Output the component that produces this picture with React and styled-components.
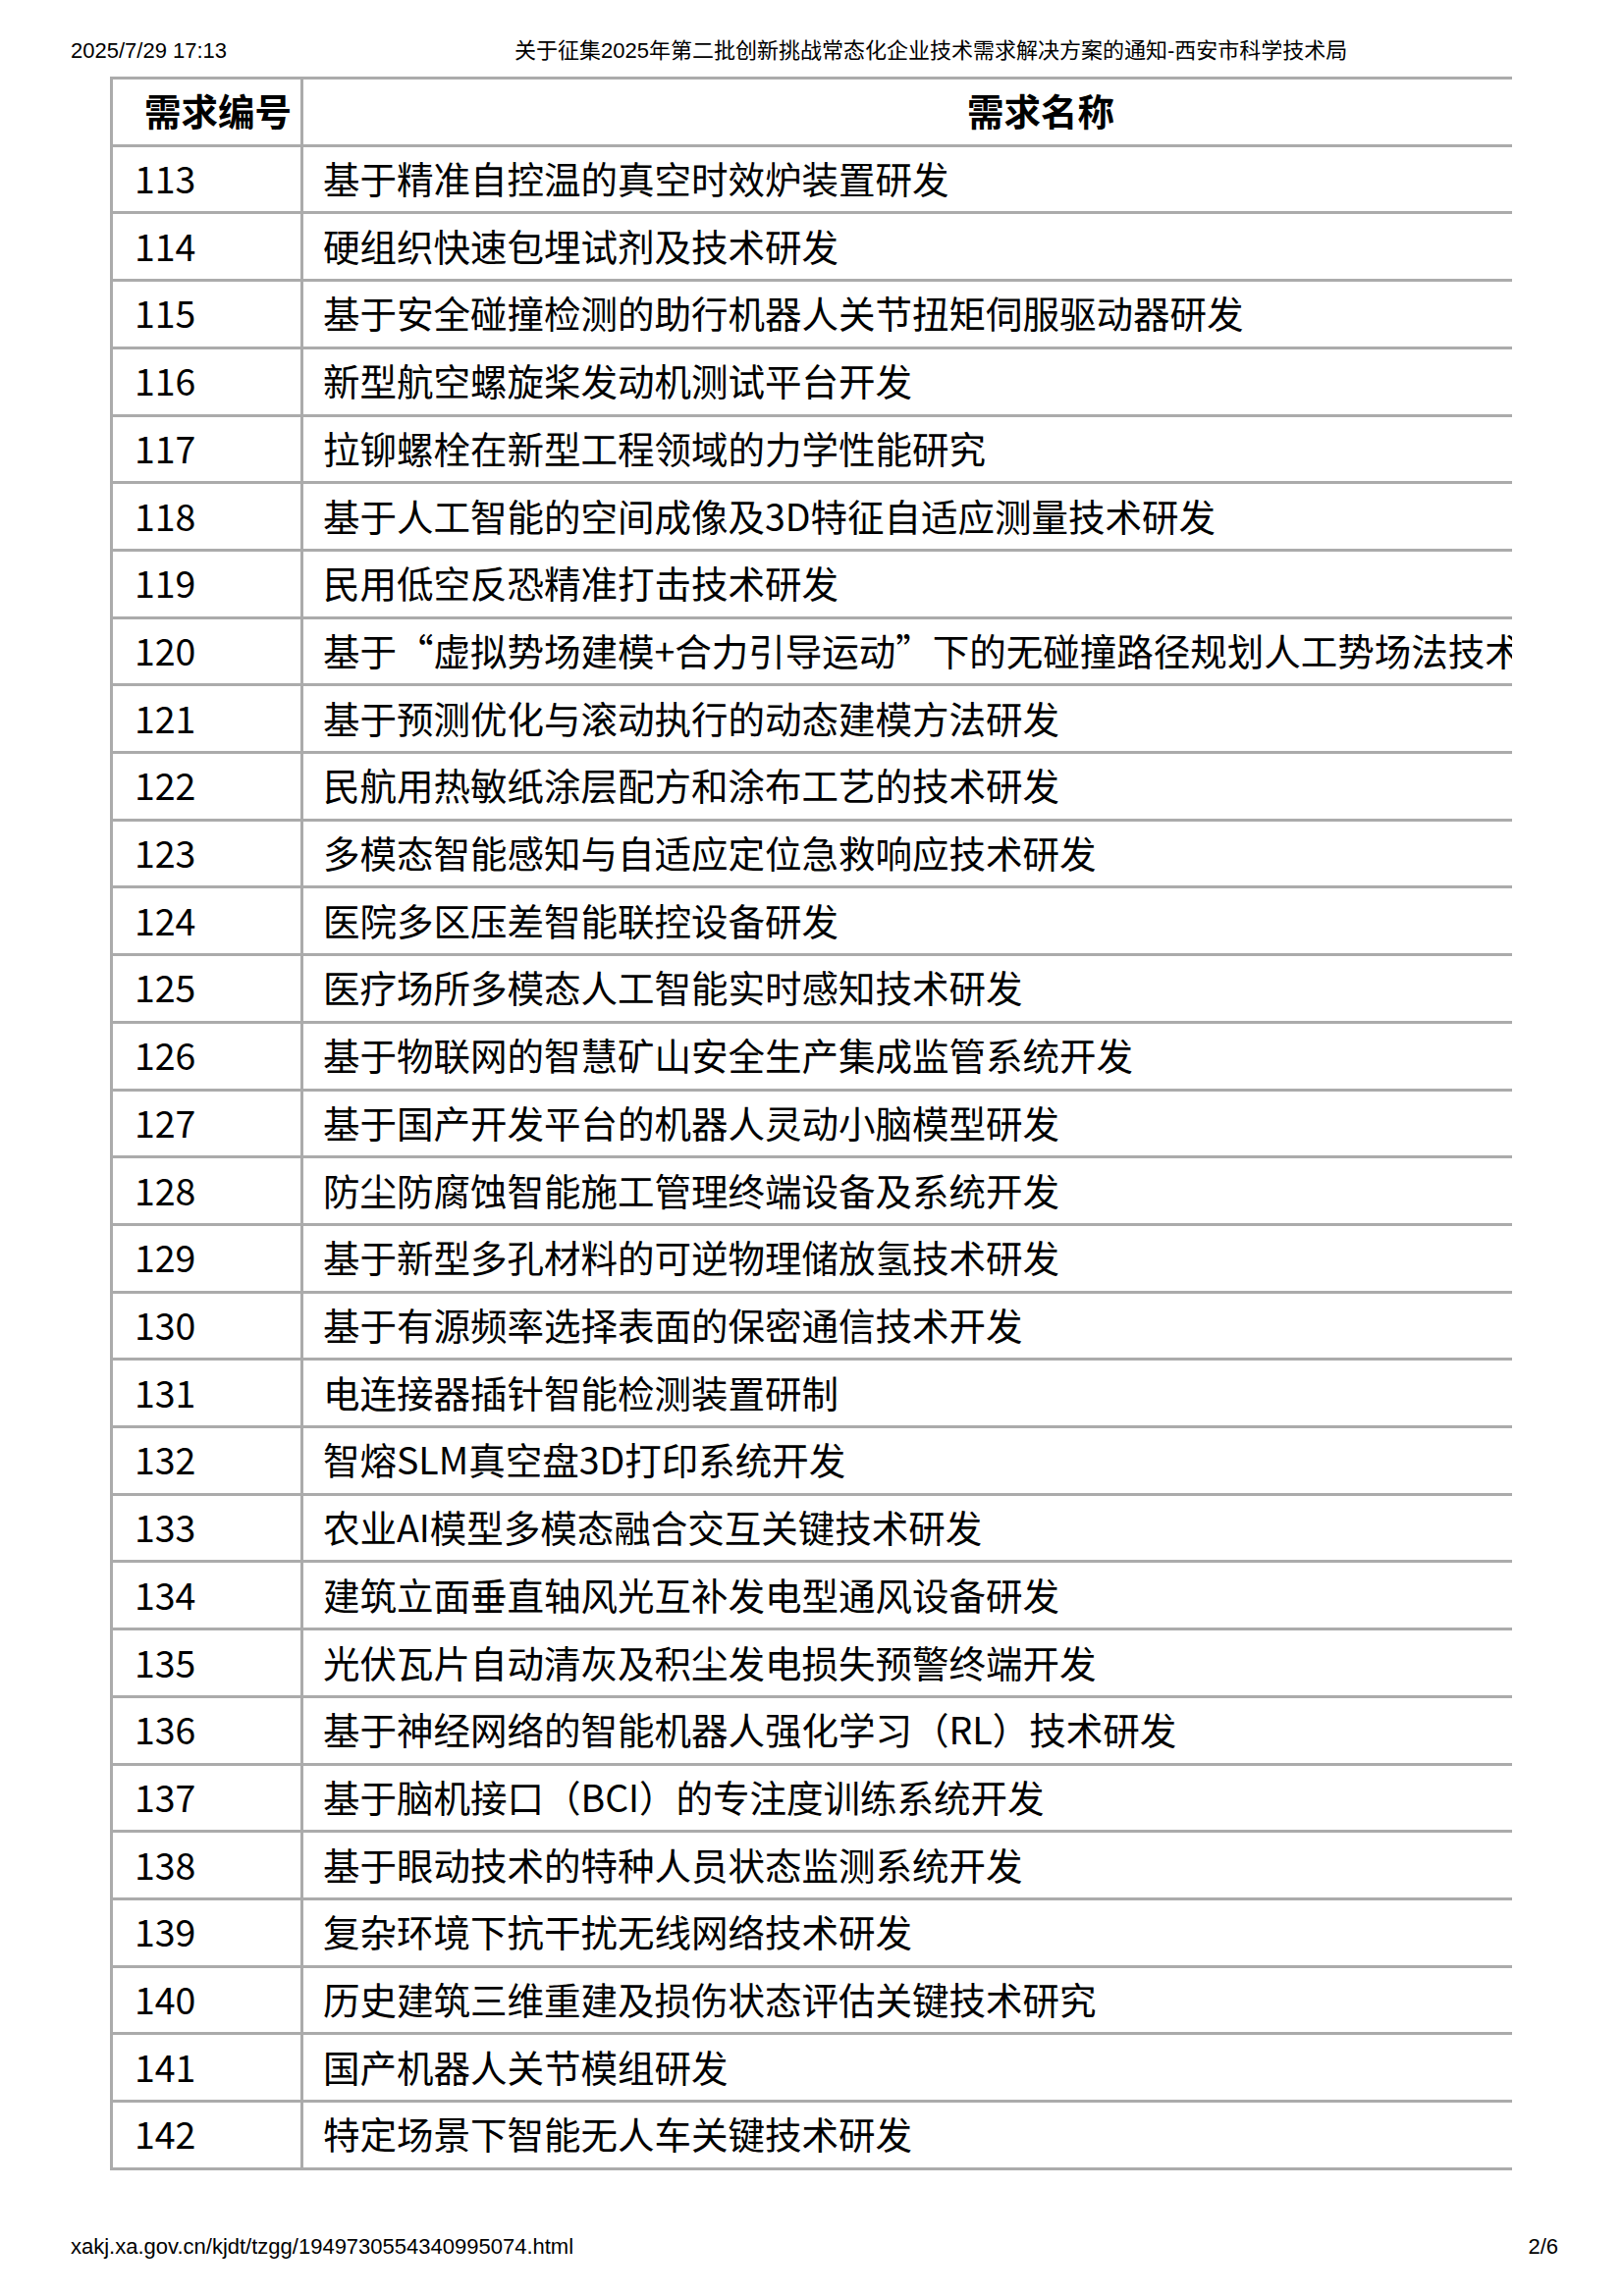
import React from 'react';
import styled, { createGlobalStyle } from 'styled-components';

const GlobalStyle = createGlobalStyle`
  html, body {
    margin: 0;
    padding: 0;
    background: #fff;
  }
`;

const Page = styled.div`
  width: 1653px;
  height: 2339px;
  display: flex;
  flex-direction: column;
  color: #000;
  font-family: "Liberation Sans", "Noto Sans CJK SC", sans-serif;
`;

const PrintHeader = styled.header`
  display: grid;
  grid-template-columns: 452px auto;
  align-items: baseline;
  padding: 41px 0 0 72px;
  line-height: 22px;
`;

const DateText = styled.span`
  font-size: 22px;
`;

const TitleText = styled.span`
  font-size: 22px;
  white-space: nowrap;
`;

const TableClip = styled.div`
  margin: 15px 0 0 112px;
  width: 1428px;
  overflow: hidden;
`;

const Table = styled.table`
  width: 1702px;
  table-layout: fixed;
  border-collapse: separate;
  border-spacing: 0;
  border-top: 3px solid #ababab;
  border-left: 3px solid #ababab;
  font-family: "Noto Sans CJK SC", "Open Sans", sans-serif;
  font-size: 37.5px;
`;

const Row = styled.tr`
  height: 68.71px;
`;

const HeadCell = styled.th`
  border-right: 3px solid #ababab;
  border-bottom: 3px solid #ababab;
  font-weight: 700;
  white-space: nowrap;
  vertical-align: middle;
  text-align: ${p => (p.$first ? 'left' : 'center')};
  padding: ${p => (p.$first ? '0 0 4px 32px' : '0 0 4px 0')};
`;

const Cell = styled.td`
  border-right: 3px solid #ababab;
  border-bottom: 3px solid #ababab;
  font-weight: 400;
  white-space: nowrap;
  overflow: hidden;
  vertical-align: middle;
  padding: ${p => (p.$num ? '0 0 4px 22px' : '0 0 4px 20px')};
`;

const PrintFooter = styled.footer`
  margin-top: auto;
  display: flex;
  justify-content: space-between;
  padding: 0 66px 39px 72px;
  font-size: 22px;
  line-height: 22px;
`;

const rows = [
  [113, '基于精准自控温的真空时效炉装置研发'],
  [114, '硬组织快速包埋试剂及技术研发'],
  [115, '基于安全碰撞检测的助行机器人关节扭矩伺服驱动器研发'],
  [116, '新型航空螺旋桨发动机测试平台开发'],
  [117, '拉铆螺栓在新型工程领域的力学性能研究'],
  [118, '基于人工智能的空间成像及3D特征自适应测量技术研发'],
  [119, '民用低空反恐精准打击技术研发'],
  [120, '基于“虚拟势场建模+合力引导运动”下的无碰撞路径规划人工势场法技术研发'],
  [121, '基于预测优化与滚动执行的动态建模方法研发'],
  [122, '民航用热敏纸涂层配方和涂布工艺的技术研发'],
  [123, '多模态智能感知与自适应定位急救响应技术研发'],
  [124, '医院多区压差智能联控设备研发'],
  [125, '医疗场所多模态人工智能实时感知技术研发'],
  [126, '基于物联网的智慧矿山安全生产集成监管系统开发'],
  [127, '基于国产开发平台的机器人灵动小脑模型研发'],
  [128, '防尘防腐蚀智能施工管理终端设备及系统开发'],
  [129, '基于新型多孔材料的可逆物理储放氢技术研发'],
  [130, '基于有源频率选择表面的保密通信技术开发'],
  [131, '电连接器插针智能检测装置研制'],
  [132, '智熔SLM真空盘3D打印系统开发'],
  [133, '农业AI模型多模态融合交互关键技术研发'],
  [134, '建筑立面垂直轴风光互补发电型通风设备研发'],
  [135, '光伏瓦片自动清灰及积尘发电损失预警终端开发'],
  [136, '基于神经网络的智能机器人强化学习（RL）技术研发'],
  [137, '基于脑机接口（BCI）的专注度训练系统开发'],
  [138, '基于眼动技术的特种人员状态监测系统开发'],
  [139, '复杂环境下抗干扰无线网络技术研发'],
  [140, '历史建筑三维重建及损伤状态评估关键技术研究'],
  [141, '国产机器人关节模组研发'],
  [142, '特定场景下智能无人车关键技术研发']
];

const App = () => {
  return (
    <Page>
      <GlobalStyle />
      <PrintHeader>
        <DateText>2025/7/29 17:13</DateText>
        <TitleText>关于征集2025年第二批创新挑战常态化企业技术需求解决方案的通知-西安市科学技术局</TitleText>
      </PrintHeader>
      <TableClip>
        <Table>
          <colgroup>
            <col style={{ width: '194px' }} />
            <col />
          </colgroup>
          <thead>
            <Row>
              <HeadCell $first>需求编号</HeadCell>
              <HeadCell>需求名称</HeadCell>
            </Row>
          </thead>
          <tbody>
            {rows.map(([id, name]) => (
              <Row key={id}>
                <Cell $num>{id}</Cell>
                <Cell>{name}</Cell>
              </Row>
            ))}
          </tbody>
        </Table>
      </TableClip>
      <PrintFooter>
        <span>xakj.xa.gov.cn/kjdt/tzgg/1949730554340995074.html</span>
        <span>2/6</span>
      </PrintFooter>
    </Page>
  );
};

export default App;
